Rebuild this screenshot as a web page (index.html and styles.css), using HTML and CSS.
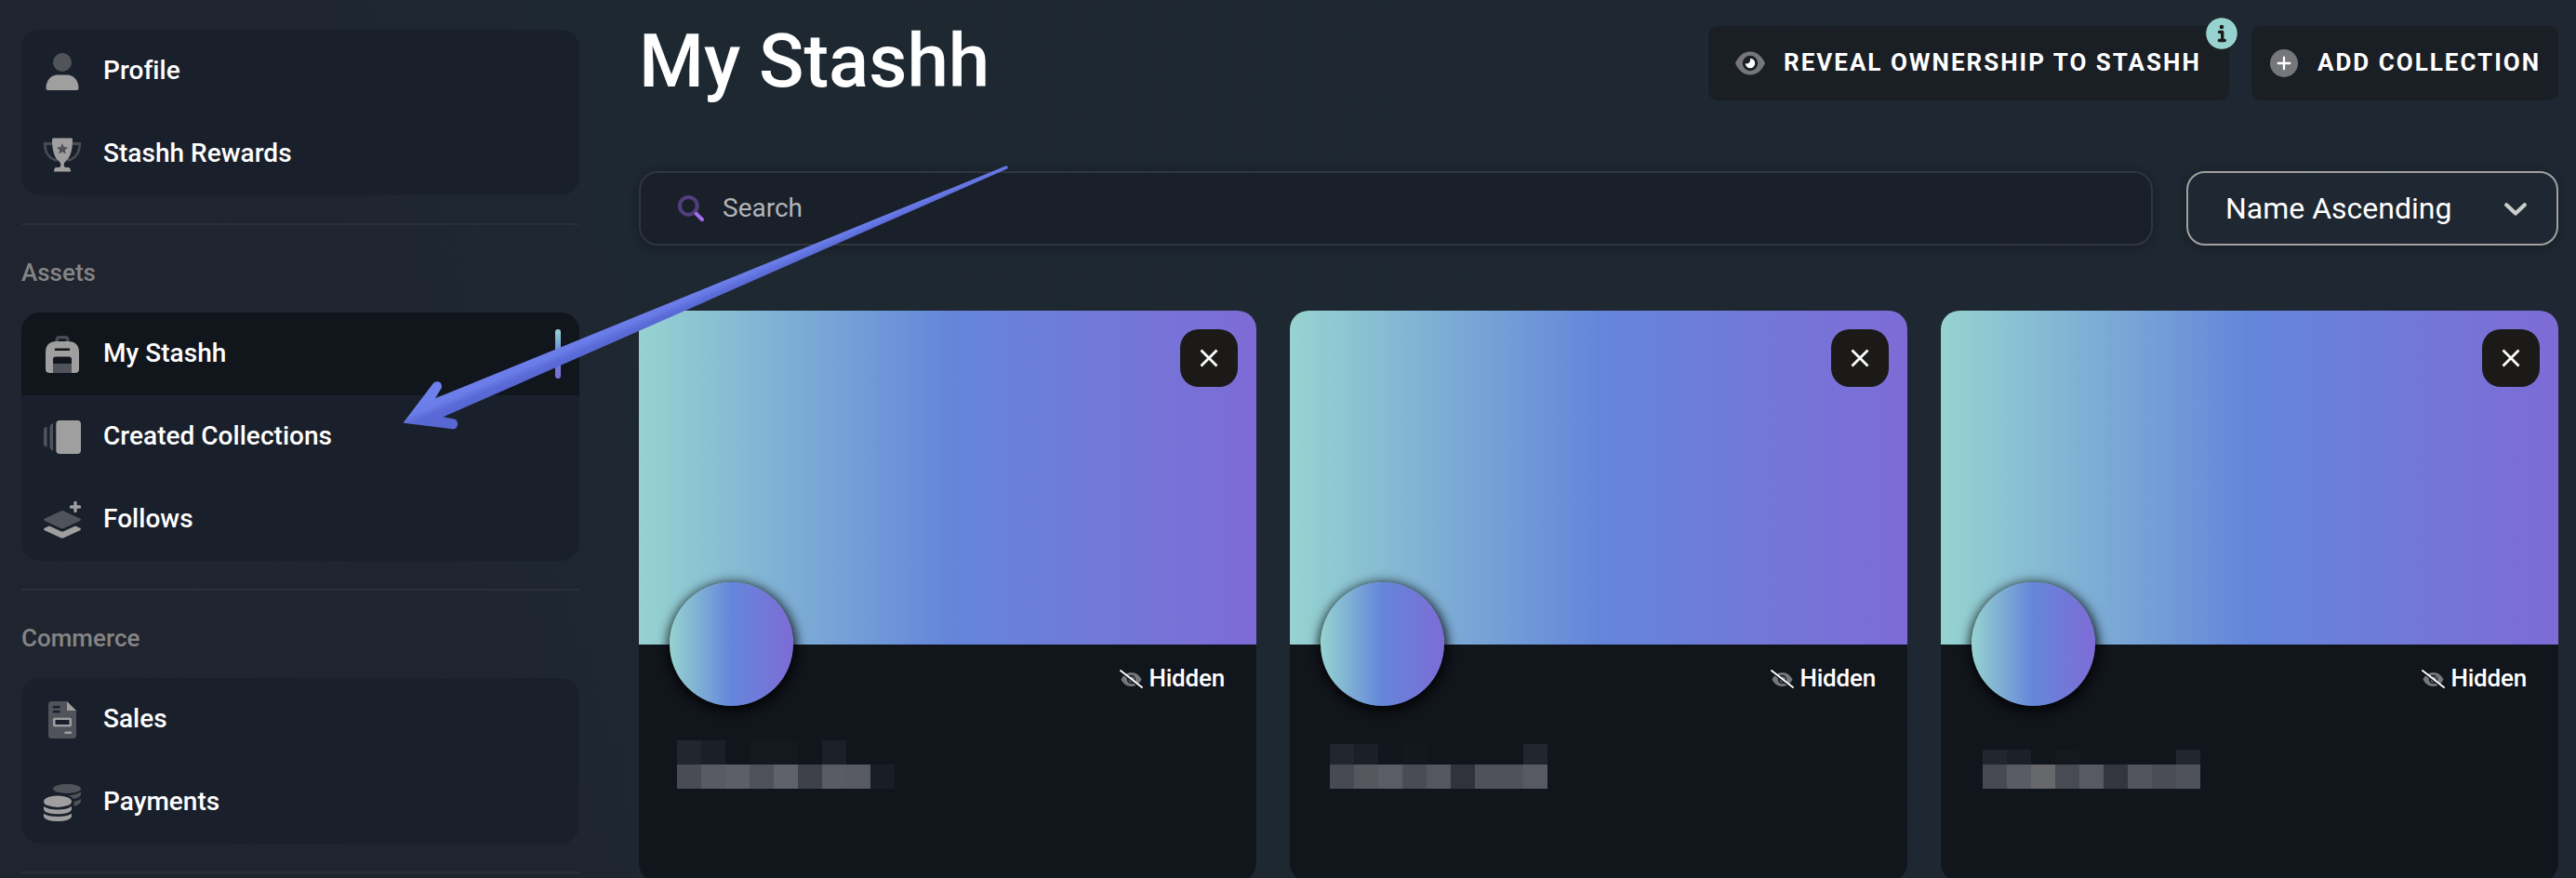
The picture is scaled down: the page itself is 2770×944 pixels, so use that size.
FILE: index.html
```html
<!DOCTYPE html>
<html lang="en">
<head>
<meta charset="utf-8">
<title>My Stashh</title>
<link rel="stylesheet" href="styles.css">
</head>
<body>
<svg class="defs" width="0" height="0">
  <symbol id="eye-off" viewBox="0 0 25 20">
    <path class="plain" fill-rule="evenodd" d="M1.500 10.500C3.500 6 7.500 3 12.500 3S21.500 6 23.500 10.500C21.500 15 17.500 18 12.500 18S3.500 15 1.500 10.500ZM12.500 5.800a4.700 4.700 0 1 0 0 9.400a4.700 4.700 0 0 0 0-9.400Z"/>
    <circle class="plain" cx="12.800" cy="10.500" r="3.200"/>
    <path d="M1 2.500L23 20" stroke="#11151c" stroke-width="2"/>
    <path d="M1 1L24 19" stroke="#fff" stroke-width="1.900" stroke-linecap="round"/>
  </symbol>
</svg>
<div class="layout">
  <nav class="sidebar">
    <div class="group">
      <a class="item"><svg class="icon" viewBox="0 0 40 40"><circle class="dim" cx="20" cy="10" r="10"/><path class="lit" d="M2.500 38C2.500 29 8 23.500 15 23.500H25C32 23.500 37.500 29 37.500 38Q37.500 40 35.500 40H4.500Q2.500 40 2.500 38Z"/></svg><span>Profile</span></a>
      <a class="item"><svg class="icon" viewBox="0 0 40 40"><path class="dim-line" stroke-width="2.800" d="M9 8.500H1.300C1.300 18 6 25 14.500 26.500M31 8.500H38.700C38.700 18 34 25 25.500 26.500"/><path class="lit" d="M10.500 2.500H29.500Q31 2.500 31 4C31 16 28.500 24 23 28Q21.800 29 21.800 31V32Q22 34 25 34H27Q29 34.500 29 38.500H11Q11 34.500 13 34H15Q18 34 18.200 32V31Q18.200 29 17 28C11.500 24 9 16 9 4Q9 2.500 10.500 2.500Z"/><path class="star" d="M20 8L21.800 12L26 12.400L22.900 15.200L23.800 19.500L20 17.300L16.200 19.500L17.100 15.200L14 12.400L18.200 12Z"/></svg><span>Stashh Rewards</span></a>
    </div>
    <hr>
    <h2>Assets</h2>
    <div class="group">
      <a class="item active"><svg class="icon" viewBox="0 0 40 40"><path class="dim-line" stroke-width="3.500" d="M14.200 7V4.500Q14.200 1.700 17 1.700H23Q25.800 1.700 25.800 4.500V7"/><path class="lit" fill-rule="evenodd" d="M14 6H26Q38 6 38 18V36Q38 40 33.500 40H30V25.500Q30 22.500 27 22.500H13Q10 22.500 10 25.500V40H6.500Q2 40 2 36V18Q2 6 14 6ZM13 13.500a1.200 1.200 0 0 0 0 2.600H27a1.200 1.200 0 0 0 0-2.600Z"/><path class="dim" d="M10 30H30V40H10Z"/></svg><span>My Stashh</span><i class="marker"></i></a>
      <a class="item"><svg class="icon" viewBox="0 0 40 40"><path class="dim" d="M3.500 9V30.500Q0 30.500 0 27V12.500Q0 9 3.500 9ZM10 5V34.500Q6.500 33 6.500 30V9Q6.500 6.500 10 5Z"/><rect class="lit" x="13.300" y="2" width="26.700" height="36" rx="4"/></svg><span>Created Collections</span></a>
      <a class="item"><svg class="icon" viewBox="0 0 40 40"><path class="lit-line" stroke-width="3.400" stroke-linecap="round" d="M34 1.500V10.500M29.500 6H38.500"/><path class="dim" d="M18.500 10.400Q20 9.700 21.500 10.400L39 18.500Q41 19.800 39 21L21.500 29Q20 29.800 18.500 29L1 21Q-1 19.800 1 18.500Z"/><path class="lit" d="M6 26.500L18.500 32.200Q20 32.900 21.500 32.200L34 26.500L39 28.800Q41 30 39 31.300L21.500 39.300Q20 40 18.500 39.300L1 31.300Q-1 30 1 28.800Z"/></svg><span>Follows</span></a>
    </div>
    <hr>
    <h2>Commerce</h2>
    <div class="group">
      <a class="item"><svg class="icon" viewBox="0 0 40 40"><path class="dim" fill-rule="evenodd" d="M8.500 0H25V7.500Q25 10 27.500 10H35V36.500Q35 40 31.500 40H8.500Q5 40 5 36.500V3.500Q5 0 8.500 0ZM11 5a1.250 1.250 0 0 0 0 2.500H16.500a1.250 1.250 0 0 0 0-2.500ZM11 10a1.250 1.250 0 0 0 0 2.500H16.500a1.250 1.250 0 0 0 0-2.500ZM10 17.500V27.500H30V17.500Z"/><path class="lit" fill-rule="evenodd" d="M25 0L35 10H25ZM11.500 17.500H28.500Q30 17.500 30 19V26Q30 27.500 28.500 27.500H11.500Q10 27.500 10 26V19Q10 17.500 11.500 17.500ZM12.500 20V25H27.500V20ZM23.500 32.500H29a1.250 1.250 0 0 1 0 2.500H23.500a1.250 1.250 0 0 1 0-2.500Z"/></svg><span>Sales</span></a>
      <a class="item"><svg class="icon" viewBox="0 0 40 40"><ellipse class="dim" cx="25" cy="5" rx="15" ry="5"/><path class="dim" d="M27 12.200Q36 11.500 40 8.500V11.500Q38.500 14.500 32 16Q30.500 13.500 27 12.200ZM32.500 19Q37.500 18 40 16V19Q38 22.500 32.500 23.800Z"/><ellipse class="lit" cx="15" cy="18.700" rx="15" ry="6.200"/><path class="lit" d="M0 24Q5 27.600 15 27.600T30 24V27.500Q28 32.300 15 32.300T0 27.500ZM0 31.800Q5 35 15 35T30 31.800V35.300Q28 40 15 40T0 35.300Z"/></svg><span>Payments</span></a>
    </div>
    <hr>
  </nav>
  <main>
    <header>
      <h1>My Stashh</h1>
      <div class="actions">
        <button class="btn reveal"><svg class="eye" viewBox="0 0 32 26"><path class="plain" fill-rule="evenodd" d="M0 13C3 6 8.500 .5 16 .5S29 6 32 13C29 20 23.500 25.500 16 25.500S3 20 0 13ZM16 4.800a8.200 8.200 0 1 0 0 16.400a8.200 8.200 0 0 0 0-16.400Z"/><path fill="#fff" d="M16 7.800a5.200 5.200 0 1 1-5.200 5.200q2.300 1.200 4.200-.8q1.800-2 1-4.400Z"/></svg><span>REVEAL OWNERSHIP TO STASHH</span>
          <svg class="info" viewBox="0 0 36 36"><circle cx="18" cy="18" r="17.300" fill="#96d3d0" stroke="#1b1a18"/><circle cx="18" cy="11" r="2.300" fill="#1b1a18"/><path d="M15.500 16.400H18.700V25.500M15.300 25.500H21.300" fill="none" stroke="#1b1a18" stroke-width="3.400" stroke-linecap="round" stroke-linejoin="round"/></svg>
        </button>
        <button class="btn add"><svg class="plus" viewBox="0 0 30 30"><circle class="plain" cx="15" cy="15" r="15"/><path d="M15 8.700V21.300M8.700 15H21.300" stroke="#fff" stroke-width="2.300" stroke-linecap="round"/></svg><span>ADD COLLECTION</span></button>
      </div>
    </header>
    <div class="filters">
      <label class="search"><svg class="glass" viewBox="0 0 28 28"><circle cx="11.300" cy="11.300" r="9.400" fill="none" stroke="#523d7d" stroke-width="4"/><path d="M19.800 19.800L26 26" stroke="#a56df0" stroke-width="4" stroke-linecap="round"/></svg><span>Search</span></label>
      <div class="select"><span>Name Ascending</span><svg class="chevron" viewBox="0 0 24 14"><path d="M2.200 2.200L12 11.600L21.800 2.200" fill="none" stroke="#ccc" stroke-width="4.200" stroke-linecap="round" stroke-linejoin="round"/></svg></div>
    </div>
    <section class="cards">
      <article class="card">
        <div class="banner"><button class="close"><svg viewBox="0 0 20 20"><path d="M1.500 1.500L18.500 18.500M18.500 1.500L1.500 18.500"/></svg></button></div>
        <div class="avatar"></div>
        <div class="status"><svg class="off"><use href="#eye-off"/></svg><span>Hidden</span></div>
        <div class="mosaic m1"><i style="background:#22262e"></i><i style="background:#1b1f27"></i><i></i><i style="background:#14181f"></i><i style="background:#14181f"></i><i></i><i style="background:#1c2028"></i><i></i><i></i><i style="background:#4a4c55"></i><i style="background:#595b64"></i><i style="background:#5d5f68"></i><i style="background:#4f525a"></i><i style="background:#5f626a"></i><i style="background:#3e4149"></i><i style="background:#5a5c65"></i><i style="background:#585a63"></i><i style="background:#191d25"></i></div>
      </article>
      <article class="card">
        <div class="banner"><button class="close"><svg viewBox="0 0 20 20"><path d="M1.500 1.500L18.500 18.500M18.500 1.500L1.500 18.500"/></svg></button></div>
        <div class="avatar"></div>
        <div class="status"><svg class="off"><use href="#eye-off"/></svg><span>Hidden</span></div>
        <div class="mosaic m2"><i style="background:#22262e"></i><i style="background:#1b1f27"></i><i></i><i style="background:#13171e"></i><i></i><i></i><i></i><i></i><i style="background:#22262e"></i><i style="background:#484a53"></i><i style="background:#55575f"></i><i style="background:#5b5d66"></i><i style="background:#494c54"></i><i style="background:#55575f"></i><i style="background:#30333b"></i><i style="background:#50525b"></i><i style="background:#50525b"></i><i style="background:#585a63"></i></div>
      </article>
      <article class="card">
        <div class="banner"><button class="close"><svg viewBox="0 0 20 20"><path d="M1.500 1.500L18.500 18.500M18.500 1.500L1.500 18.500"/></svg></button></div>
        <div class="avatar"></div>
        <div class="status"><svg class="off"><use href="#eye-off"/></svg><span>Hidden</span></div>
        <div class="mosaic m3"><i style="background:#22262e"></i><i style="background:#1c2028"></i><i></i><i style="background:#14181f"></i><i></i><i></i><i></i><i></i><i style="background:#22262e"></i><i style="background:#474a52"></i><i style="background:#5a5c65"></i><i style="background:#66686b"></i><i style="background:#484b53"></i><i style="background:#585a63"></i><i style="background:#33363e"></i><i style="background:#53555e"></i><i style="background:#4a4d55"></i><i style="background:#4f525a"></i></div>
      </article>
    </section>
  </main>
</div>
<svg class="pointer" viewBox="0 0 2770 944">
  <defs><linearGradient id="shaft" gradientUnits="userSpaceOnUse" x1="646" y1="352" x2="654" y2="371"><stop offset="0" stop-color="#6d80ec"/><stop offset=".4" stop-color="#6a7ce8"/><stop offset=".75" stop-color="#5a6bd7"/><stop offset="1" stop-color="#5768d4"/></linearGradient></defs>
  <path fill="url(#shaft)" d="M433.500 454.700L464.800 413.500C468.500 407.500 476.500 410.500 474.800 417L468 428.300L1082 178.300Q1085 179.500 1083 181.600L476.500 448.300L488.500 450.400C494 452 493 461.500 487 461.200Z"/>
</svg>
</body>
</html>
```
FILE: styles.css
```css
* { box-sizing: border-box; }
body {
  margin: 0;
  height: 944px;
  overflow: hidden;
  position: relative;
  font-family: Roboto, "Liberation Sans", sans-serif;
  font-weight: 500;
  color: #fff;
  background: linear-gradient(72deg, #20242f 0%, #1f2530 19%, #1e2831 29%, #1f2832 100%);
}
button { border: 0; padding: 0; color: inherit; font: inherit; }
svg { display: block; flex: none; overflow: visible; }
h1, h2 { margin: 0; font-weight: 500; white-space: nowrap; }
.defs { position: absolute; }
.layout { display: flex; gap: 64px; height: 944px; padding: 0 19px 0 23px; }

.dim { fill: #50535a; }
.lit { fill: #9f9f9f; }
.star { fill: #50535a; }
.plain { fill: #75777b; }
.dim-line { fill: none; stroke: #484b53; }
.lit-line { fill: none; stroke: #9f9f9f; }

.sidebar { width: 600px; flex: none; padding-top: 32px; }
.group { background: #1a202b; border-radius: 20px; overflow: hidden; }
.item { display: flex; align-items: center; gap: 24px; height: 89px; padding: 0 20px 0 24px; font-size: 28px; line-height: 32px; letter-spacing: .03px; }
.item span { padding-bottom: 1px; }
.icon { width: 40px; height: 40px; }
.active { background: #11151c; }
.marker { width: 6px; height: 53px; margin-left: auto; border-radius: 3px; background: linear-gradient(#96d3d0, #6486da 50%, #7e6bd6); }
.sidebar hr { height: 2px; margin: 30px 0 0; border: 0; background: #2a2e38; }
.sidebar h2 { height: 94px; padding-top: 36px; font-size: 26px; line-height: 30px; color: #858585; }

main { flex: 1; min-width: 0; padding-top: 28px; }
header { display: flex; justify-content: space-between; height: 156px; }
h1 { font-size: 80px; line-height: 76px; }
.actions { display: flex; gap: 24px; height: 80px; }
.btn { position: relative; display: flex; align-items: center; height: 80px; border-radius: 10px; background: #1a1e25; font-size: 26px; font-weight: 700; letter-spacing: 2px; white-space: nowrap; }
.reveal { width: 560px; padding-left: 29px; gap: 20px; }
.add { width: 330px; padding-left: 20px; gap: 21px; }
.btn span { padding-bottom: 3px; }
.eye { width: 32px; height: 26px; }
.plus { width: 30px; height: 30px; }
.info { position: absolute; top: -10px; right: -10px; width: 36px; height: 36px; }

.filters { display: flex; gap: 36px; height: 150px; }
.search, .select { display: flex; align-items: center; height: 80px; border-radius: 20px; font-weight: 400; box-shadow: 0 2px 8px 2px rgba(10, 13, 20, .3); }
.search { flex: 1; gap: 20px; padding: 0 40px; border: 2px solid #30353e; background: #1a202a; font-size: 28px; color: #b2b4b8; }
.select { width: 400px; justify-content: space-between; padding: 0 32px 0 40px; border: 2px solid #a0a0a0; font-size: 32px; }
.search span { padding-bottom: 2px; }
.glass { width: 28px; height: 28px; }
.chevron { width: 24px; height: 14px; margin-top: 2px; }

.cards { display: grid; grid-template-columns: repeat(3, 1fr); gap: 36px; }
.card { display: grid; grid-template: 359px 255px / 1fr auto; height: 614px; border-radius: 20px; background: #11151c; overflow: hidden; }
.banner, .avatar { background: linear-gradient(90deg, #96d3d0, #6486da 50%, #7e6bd6); }
.banner { grid-area: 1 / 1 / 2 / 3; display: flex; justify-content: flex-end; padding: 20px; }
.close { display: grid; place-items: center; width: 62px; height: 62px; border-radius: 20px; background: #1b1a18; }
.close svg { width: 20px; height: 20px; fill: none; stroke: #fff; stroke-width: 2.800; }
.avatar { grid-area: 2 / 1; width: 133px; height: 133px; margin: -67px 0 0 33px; border-radius: 50%; box-shadow: 1px 3px 12px 3px rgba(0, 0, 0, .8); }
.status { grid-area: 2 / 2; display: flex; align-items: center; gap: 6px; height: 32px; margin: 20px 34px 0 0; font-size: 26px; line-height: 30px; letter-spacing: -.2px; }
.off { width: 25px; height: 20px; margin-top: 1px; }
.mosaic { grid-area: 2 / 1; display: grid; grid-template: 26px 26px / repeat(9, 26px); align-self: start; margin: 103px 0 0 41px; }
.m2 { grid-template-rows: 22px 26px; margin: 107px 0 0 43px; }
.m3 { grid-template-rows: 16px 26px; margin: 113px 0 0 45px; }

.pointer { position: absolute; top: 0; left: 0; width: 2770px; height: 944px; pointer-events: none; }
```
